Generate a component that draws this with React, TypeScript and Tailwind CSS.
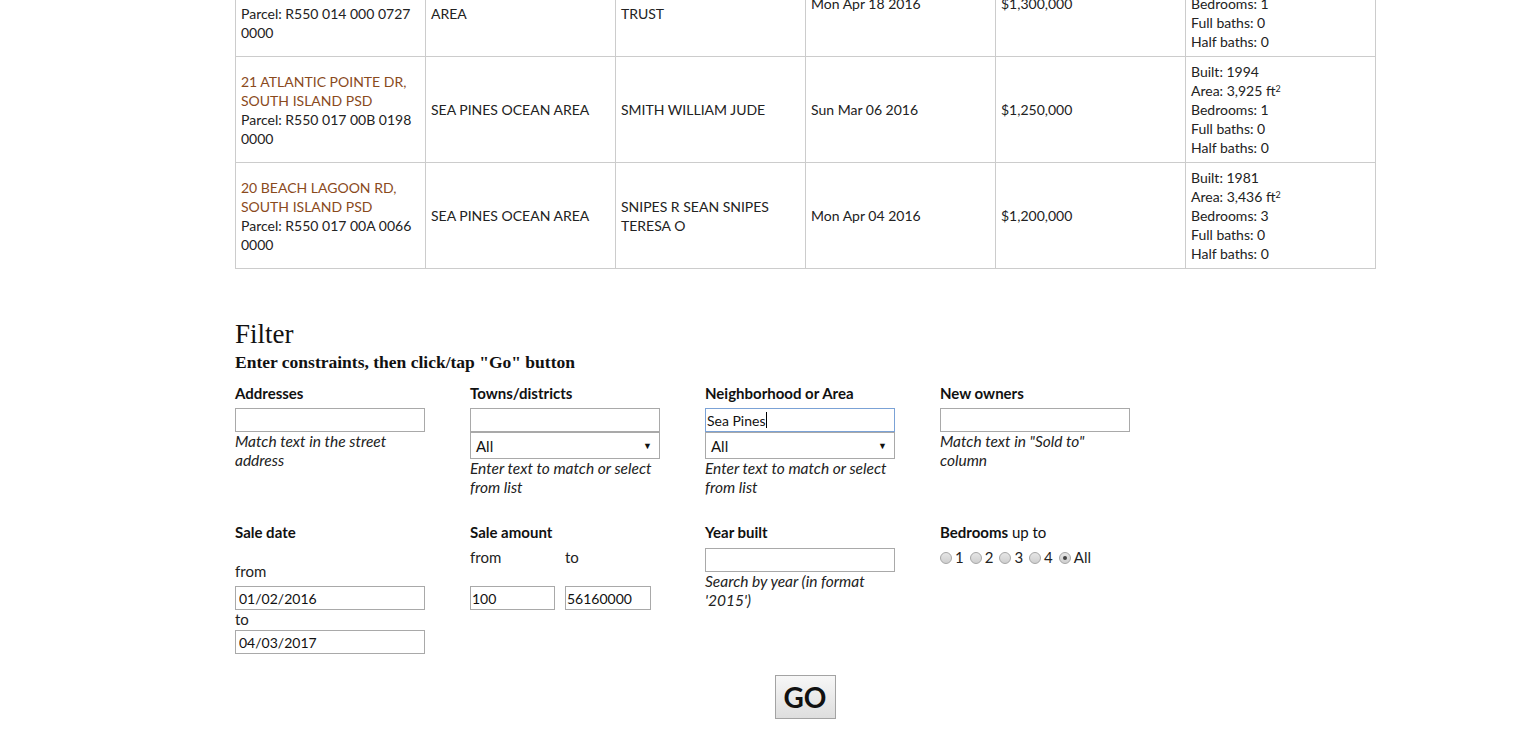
import React from 'react';

type Sale = {
    address: string;
    parcel: string;
    area: string;
    owner: string;
    date: string;
    price: string;
    built: string;
    sqft: string;
    beds: number;
};

const sales: Sale[] = [
    {
        address: '9 OCEAN POINT LN, SOUTH ISLAND PSD',
        parcel: 'R550 014 000 0727 0000',
        area: 'NORTH FOREST BEACH AREA',
        owner: 'SMITH FAMILY LIVING TRUST',
        date: 'Mon Apr 18 2016',
        price: '$1,300,000',
        built: '1998',
        sqft: '4,210',
        beds: 1,
    },
    {
        address: '21 ATLANTIC POINTE DR, SOUTH ISLAND PSD',
        parcel: 'R550 017 00B 0198 0000',
        area: 'SEA PINES OCEAN AREA',
        owner: 'SMITH WILLIAM JUDE',
        date: 'Sun Mar 06 2016',
        price: '$1,250,000',
        built: '1994',
        sqft: '3,925',
        beds: 1,
    },
    {
        address: '20 BEACH LAGOON RD, SOUTH ISLAND PSD',
        parcel: 'R550 017 00A 0066 0000',
        area: 'SEA PINES OCEAN AREA',
        owner: 'SNIPES R SEAN SNIPES TERESA O',
        date: 'Mon Apr 04 2016',
        price: '$1,200,000',
        built: '1981',
        sqft: '3,436',
        beds: 3,
    },
];

const cell = 'border border-[#cccccc] px-[5px] py-[5px] align-middle';

function TextBox({ value = '', className = '' }: { value?: string; className?: string }) {
    return (
        <input
            readOnly
            defaultValue={value}
            className={`block h-[24px] border border-[#a9a9a9] bg-white px-[3px] text-[14px] text-[#111] outline-none ${className}`}
        />
    );
}

function SelectBox() {
    return (
        <div className="flex h-[27px] w-[190px] items-center justify-between border border-[#a9a9a9] bg-white pl-[5px] pr-[7px] text-[15px] text-[#111]">
            <span className="pt-[2px]">All</span>
            <span className="text-[9px]">▼</span>
        </div>
    );
}

function Hint({ children }: { children: React.ReactNode }) {
    return <p className="text-[15.5px] italic leading-[19px] text-[#222]">{children}</p>;
}

function Label({ children }: { children: React.ReactNode }) {
    return <div className="text-[15px] font-bold leading-[19px] text-[#111]">{children}</div>;
}

function Radio({ label, checked = false }: { label: string; checked?: boolean }) {
    return (
        <span className="flex items-center">
            <span className="flex h-[12px] w-[12px] items-center justify-center rounded-full border border-[#a6a6a6] bg-gradient-to-b from-[#e6e6e6] to-[#cfcfcf]">
                {checked && <span className="h-[4px] w-[4px] rounded-full bg-[#444]" />}
            </span>
            <span className="ml-[3px]">{label}</span>
        </span>
    );
}

export default function App() {
    return (
        <div className="min-h-screen bg-white font-['Lato',sans-serif] text-[#222]">
            <div className="ml-[235px] -mt-[50px] w-[1140px] pb-[30px]">
                {/* Results table (scrolled) */}
                <table className="w-[1140px] table-fixed border-collapse text-[14px] leading-[19px]">
                    <tbody>
                        {sales.map((s) => (
                            <tr key={s.parcel}>
                                <td className={`${cell} w-[190px]`}>
                                    <div className="text-[#8a4a1c]">{s.address}</div>
                                    <div>Parcel: {s.parcel}</div>
                                </td>
                                <td className={`${cell} w-[190px]`}>{s.area}</td>
                                <td className={`${cell} w-[190px]`}>{s.owner}</td>
                                <td className={`${cell} w-[190px]`}>{s.date}</td>
                                <td className={`${cell} w-[190px]`}>{s.price}</td>
                                <td className={`${cell} w-[190px]`}>
                                    <div>Built: {s.built}</div>
                                    <div>
                                        Area: {s.sqft} ft<sup className="text-[9px]">2</sup>
                                    </div>
                                    <div>Bedrooms: {s.beds}</div>
                                    <div>Full baths: 0</div>
                                    <div>Half baths: 0</div>
                                </td>
                            </tr>
                        ))}
                    </tbody>
                </table>

                {/* Filter */}
                <h2 className="mt-[50px] font-['Liberation_Serif',serif] text-[27px] leading-[30px] text-[#111]">Filter</h2>
                <p className="mt-[2px] font-['Liberation_Serif',serif] text-[17.5px] font-bold leading-[22px] text-[#111]">
                    Enter constraints, then click/tap "Go" button
                </p>

                <div className="mt-[11px] grid grid-cols-[190px_190px_190px_190px] gap-x-[45px] gap-y-[26px]">
                    <div>
                        <Label>Addresses</Label>
                        <TextBox className="mt-[5px] w-[190px]" />
                        <Hint>Match text in the street address</Hint>
                    </div>
                    <div>
                        <Label>Towns/districts</Label>
                        <TextBox className="mt-[5px] w-[190px]" />
                        <SelectBox />
                        <Hint>Enter text to match or select from list</Hint>
                    </div>
                    <div>
                        <Label>Neighborhood or Area</Label>
                        <div className="mt-[5px] flex h-[24px] w-[190px] items-center border border-[#7ba2d6] pl-[1px] text-[14px] text-[#111]">
                            Sea Pines
                            <span className="ml-[1px] h-[16px] w-[1px] bg-black" />
                        </div>
                        <SelectBox />
                        <Hint>Enter text to match or select from list</Hint>
                    </div>
                    <div>
                        <Label>New owners</Label>
                        <TextBox className="mt-[5px] w-[190px]" />
                        <Hint>Match text in "Sold to" column</Hint>
                    </div>

                    <div>
                        <Label>Sale date</Label>
                        <div className="mt-[20px] text-[15px] leading-[19px]">from</div>
                        <TextBox value="01/02/2016" className="mt-[5px] w-[190px]" />
                        <div className="text-[15px] leading-[19px]">to</div>
                        <TextBox value="04/03/2017" className="mt-[1px] w-[190px]" />
                    </div>
                    <div>
                        <Label>Sale amount</Label>
                        <div className="mt-[6px] flex gap-[10px] text-[15px] leading-[19px]">
                            <div className="w-[85px]">
                                <div>from</div>
                                <TextBox value="100" className="mt-[19px] w-[85px] !px-[1px]" />
                            </div>
                            <div className="w-[86px]">
                                <div>to</div>
                                <TextBox value="56160000" className="mt-[19px] w-[86px] !px-[1px]" />
                            </div>
                        </div>
                    </div>
                    <div>
                        <Label>Year built</Label>
                        <TextBox className="mt-[6px] w-[190px]" />
                        <Hint>Search by year (in format '2015')</Hint>
                    </div>
                    <div>
                        <div className="text-[15px] leading-[19px] text-[#111]">
                            <span className="font-bold">Bedrooms</span> up to
                        </div>
                        <div className="mt-[6px] flex gap-[6px] text-[15px] leading-[19px]">
                            <Radio label="1" />
                            <Radio label="2" />
                            <Radio label="3" />
                            <Radio label="4" />
                            <Radio label="All" checked />
                        </div>
                    </div>
                </div>

                <div className="mt-[21px] flex justify-center">
                    <button className="h-[44px] w-[61px] border border-[#a3a3a3] bg-gradient-to-b from-[#f7f7f7] to-[#dedede] text-[28px] font-bold text-[#111]">
                        GO
                    </button>
                </div>
            </div>
        </div>
    );
}
